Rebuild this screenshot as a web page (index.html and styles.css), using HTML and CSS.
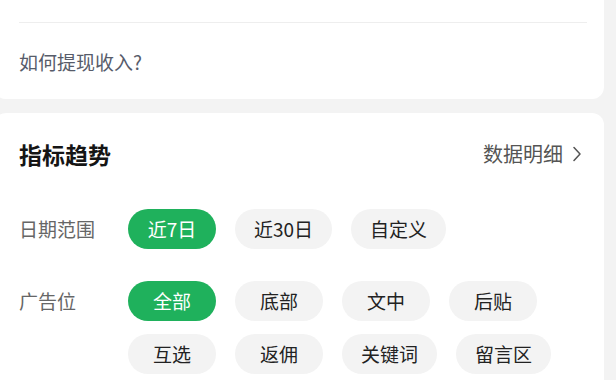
FILE: index.html
```html
<!DOCTYPE html>
<html lang="zh-CN">
<head>
<meta charset="utf-8">
<link rel="stylesheet" href="styles.css">
</head>
<body>
<div class="page">
  <section class="card card-top">
    <div class="top-spacer"></div>
    <div class="divider"></div>
    <div class="help-link">如何提现收入?</div>
  </section>

  <section class="card card-trend">
    <div class="title-row">
      <h2 class="title">指标趋势</h2>
      <a class="detail-link">数据明细<svg class="chev" width="8" height="16" viewBox="0 0 8 16"><polyline points="1,1.5 7,8 1,14.5" fill="none" stroke="#555" stroke-width="1.5" stroke-linecap="round" stroke-linejoin="round"/></svg></a>
    </div>

    <div class="filter-row date-row">
      <div class="filter-label">日期范围</div>
      <div class="pills">
        <span class="pill active">近7日</span>
        <span class="pill">近30日</span>
        <span class="pill">自定义</span>
      </div>
    </div>

    <div class="filter-row ad-row">
      <div class="filter-label">广告位</div>
      <div class="pills">
        <span class="pill active">全部</span>
        <span class="pill">底部</span>
        <span class="pill">文中</span>
        <span class="pill">后贴</span>
        <span class="pill">互选</span>
        <span class="pill">返佣</span>
        <span class="pill">关键词</span>
        <span class="pill">留言区</span>
      </div>
    </div>
  </section>
</div>
</body>
</html>
```

FILE: styles.css
```css
html, body {
  margin: 0;
  padding: 0;
  background: #f3f3f3;
  font-family: "Noto Sans CJK SC", "Noto Sans", sans-serif;
  overflow: hidden;
}

.page {
  width: 610px;
  margin-left: -6px;
  margin-top: -20px;
}

.card {
  background: #ffffff;
  border-radius: 12px;
}

.card-top {
  padding: 0 17px 25px 25px;
}

.top-spacer {
  height: 42px;
}

.divider {
  height: 1px;
  background: #eeeeee;
}

.help-link {
  margin-top: 27px;
  font-size: 19px;
  line-height: 24px;
  color: #575c6a;
}

.card-trend {
  margin-top: 14px;
  padding: 25px 21px 30px 25px;
}

.title-row {
  display: flex;
  justify-content: space-between;
  align-items: center;
  height: 32px;
}

.title {
  margin: 0;
  font-size: 23px;
  font-weight: 700;
  color: #151515;
  line-height: 32px;
}

.detail-link {
  display: flex;
  align-items: center;
  gap: 10px;
  margin-right: 2px;
  font-size: 20px;
  color: #555555;
  line-height: 32px;
}

.chev {
  display: block;
}

.filter-row {
  display: flex;
  align-items: flex-start;
}

.date-row {
  margin-top: 39px;
}

.ad-row {
  margin-top: 32px;
}

.filter-label {
  width: 109px;
  flex: none;
  font-size: 19px;
  line-height: 40px;
  color: #666666;
}

.pills {
  display: flex;
  flex-wrap: wrap;
  column-gap: 19px;
  row-gap: 13px;
  width: 440px;
}

.pill {
  box-sizing: border-box;
  min-width: 88px;
  height: 40px;
  padding: 0 19px;
  border-radius: 20px;
  background: #f3f3f3;
  color: #222222;
  font-size: 19px;
  line-height: 40px;
  text-align: center;
}

.pill.active {
  background: #1fb15c;
  color: #ffffff;
}
```
